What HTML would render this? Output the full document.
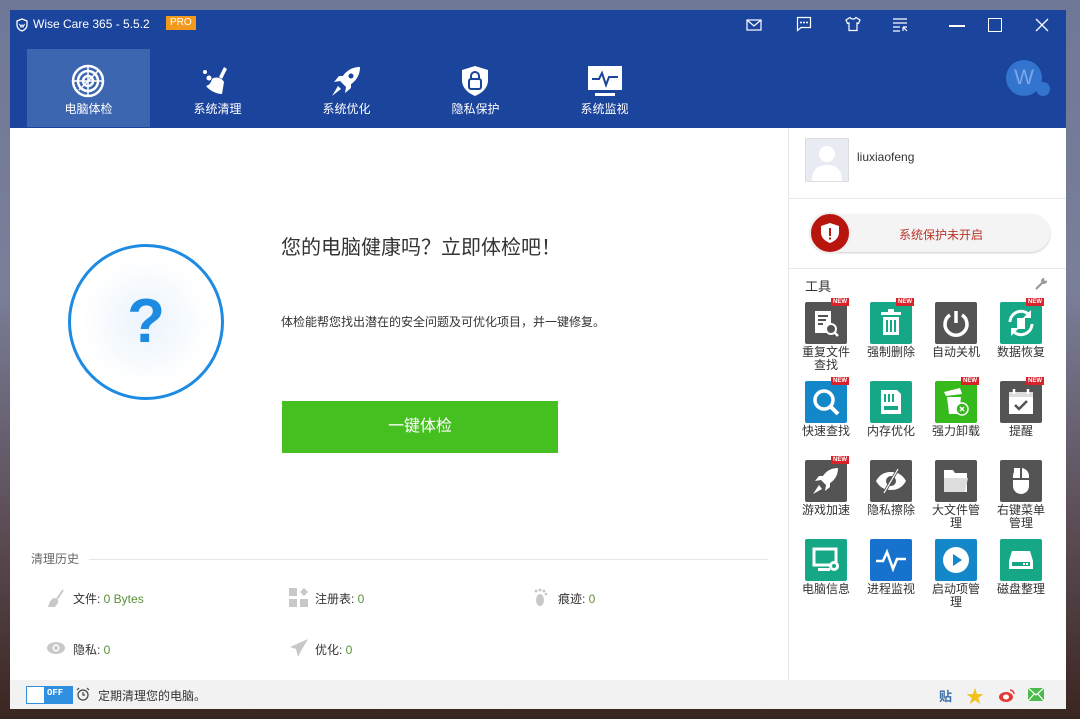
<!DOCTYPE html>
<html><head><meta charset="utf-8"><style>
*{margin:0;padding:0;box-sizing:border-box}
body{width:1080px;height:719px;overflow:hidden;position:relative;font-family:"Liberation Sans","Noto Sans CJK SC",sans-serif;background:linear-gradient(180deg,#6f7897 0%,#7a7f99 40%,#5a4a52 75%,#3a2620 100%)}
.a{position:absolute}
.win{left:10px;top:10px;width:1056px;height:699px;background:#fff;overflow:hidden}
.hdr{left:0;top:0;width:1056px;height:118px;background:#1b449c}
.tab{top:39px;width:123px;height:78px;color:#fff;font-size:12px;text-align:center}
.tab span{position:absolute;left:0;right:0;top:51px}
.tab svg{position:absolute;left:44px;top:15px}
.t{color:#333;font-size:12px;white-space:nowrap}
.tool{width:42px;height:42px;border-radius:2px}
.new{position:absolute;right:-2px;top:-4px;background:#d9222a;color:#fff;font-size:6px;font-weight:bold;padding:0 2px;line-height:8px}
.lbl{font-size:12px;color:#333;text-align:center;width:50px;line-height:13px;white-space:normal;word-break:break-all}
.g{color:#5a8f3a}
</style></head><body>
<div class="a win">
 <div class="a hdr">
  <svg class="a" style="left:5px;top:8px" width="14" height="14" viewBox="0 0 14 14"><path d="M7 1L12 3V7C12 10 9.5 12 7 13C4.5 12 2 10 2 7V3Z" fill="none" stroke="#fff" stroke-width="1.3"/><path d="M4.5 6L6 9L7 7L8 9L9.5 6" fill="none" stroke="#fff" stroke-width="1"/></svg>
  <div class="a" style="left:23px;top:7px;color:#fff;font-size:12px">Wise Care 365 - 5.5.2</div>
  <div class="a" style="left:156px;top:6px;background:#f39a1d;color:#fff;font-size:10px;padding:1px 4px;line-height:12px">PRO</div>
  <svg class="a" style="left:736px;top:8px" width="16" height="14"><rect x="1" y="2" width="14" height="10" fill="none" stroke="#fff" stroke-width="1.2"/><path d="M1 2L8 8L15 2" fill="none" stroke="#fff" stroke-width="1.2"/></svg>
  <svg class="a" style="left:786px;top:6px" width="16" height="16"><path d="M1.5 1.5H14.5V11.5H5L1.5 14.5Z" fill="none" stroke="#fff" stroke-width="1.2"/><circle cx="5" cy="6.5" r="1" fill="#fff"/><circle cx="8" cy="6.5" r="1" fill="#fff"/><circle cx="11" cy="6.5" r="1" fill="#fff"/></svg>
  <svg class="a" style="left:834px;top:6px" width="18" height="16"><path d="M6 1.5L2 4L3.5 7.5L5 7V14.5H13V7L14.5 7.5L16 4L12 1.5C11 3.5 7 3.5 6 1.5Z" fill="none" stroke="#fff" stroke-width="1.2"/></svg>
  <svg class="a" style="left:882px;top:7px" width="16" height="16"><path d="M1 2H15M1 6H15M1 10H8M1 14H8" stroke="#fff" stroke-width="1.2"/><path d="M11 10V14M11 10H15M11 10L15 14" stroke="#fff" stroke-width="1.2"/></svg>
  <div class="a" style="left:939px;top:15px;width:16px;height:1.5px;background:#fff"></div>
  <div class="a" style="left:978px;top:8px;width:14px;height:14px;border:1.3px solid #fff"></div>
  <svg class="a" style="left:1025px;top:8px" width="14" height="14"><path d="M1 1L13 13M13 1L1 13" stroke="#fff" stroke-width="1.3"/></svg>
  <div class="a" style="left:996px;top:50px;width:36px;height:36px;border-radius:50%;background:#3374cf;color:#7fa7e3;font-size:21px;text-align:center;line-height:36px">W</div>
  <div class="a" style="left:1026px;top:72px;width:14px;height:14px;border-radius:50%;background:#3374cf"></div>

  <div class="a tab" style="left:17px;background:#3d66b1">
   <svg width="34" height="34" viewBox="0 0 34 34"><circle cx="17" cy="17" r="15" fill="none" stroke="#fff" stroke-width="2.5"/><circle cx="17" cy="17" r="10" fill="none" stroke="#fff" stroke-width="2.5"/><circle cx="17" cy="17" r="5" fill="none" stroke="#fff" stroke-width="2.5"/><path d="M2 17H32M17 2V32M8 26L27 7" stroke="#fff" stroke-width="1.5"/></svg><span>电脑体检</span></div>
  <div class="a tab" style="left:146px">
   <svg width="34" height="34" viewBox="0 0 34 34"><circle cx="5" cy="8" r="2" fill="#fff"/><circle cx="9" cy="14" r="2.5" fill="#fff"/><path d="M24 3L27 5L22 15L19 13Z" fill="#fff"/><path d="M12 15C16 12 22 14 24 18L22 30C17 30 10 27 6 22C10 21 11 18 12 15Z" fill="#fff"/></svg><span>系统清理</span></div>
  <div class="a tab" style="left:275px">
   <svg width="34" height="34" viewBox="0 0 34 34"><path d="M31 3C22 3 15 8 11 17L17 23C26 19 31 12 31 3Z" fill="#fff"/><path d="M11 17L5 18L10 12H16ZM17 23L16 29L22 24V18Z" fill="#fff"/><path d="M9 22L3 32L12 25" fill="#fff"/><circle cx="22" cy="12" r="2.5" fill="#1b449c"/></svg><span>系统优化</span></div>
  <div class="a tab" style="left:404px">
   <svg width="34" height="34" viewBox="0 0 34 34"><path d="M17 2L30 6V16C30 24 24 29 17 32C10 29 4 24 4 16V6Z" fill="#fff"/><rect x="11" y="15" width="12" height="10" rx="2" fill="none" stroke="#1b449c" stroke-width="2"/><path d="M13 15V12A4 4 0 0 1 21 12V15" fill="none" stroke="#1b449c" stroke-width="2"/></svg><span>隐私保护</span></div>
  <div class="a tab" style="left:533px">
   <svg width="36" height="34" viewBox="0 0 36 34"><rect x="1" y="2" width="34" height="24" fill="#fff"/><rect x="8" y="29" width="20" height="3" fill="#fff"/><path d="M5 15H12L15 9L19 21L22 13H31" fill="none" stroke="#1b449c" stroke-width="2"/></svg><span>系统监视</span></div>
 </div>

 <!-- main -->
 <div class="a" style="left:778px;top:118px;width:1px;height:552px;background:#e6e6e6"></div>
 <div class="a" style="left:58px;top:234px;width:156px;height:156px;border-radius:50%;border:3px solid #1e8be3;background:radial-gradient(circle,#eaf3fc 0%,#fff 60%)"></div>
 <div class="a" style="left:58px;top:272px;width:156px;text-align:center;color:#1e8be3;font-size:62px;font-weight:bold;line-height:80px">?</div>
 <div class="a" style="left:271px;top:221px;font-size:20px;color:#333">您的电脑健康吗？立即体检吧！</div>
 <div class="a t" style="left:271px;top:303px;font-size:12px">体检能帮您找出潜在的安全问题及可优化项目，并一键修复。</div>
 <div class="a" style="left:272px;top:391px;width:276px;height:52px;background:#46bf21;color:#fff;font-size:16px;text-align:center;line-height:52px">一键体检</div>

 <div class="a t" style="left:21px;top:540px;color:#666">清理历史</div>
 <div class="a" style="left:79px;top:549px;width:679px;height:1px;background:#e6e6e6"></div>

 <svg class="a" style="left:36px;top:578px" width="20" height="20"><path d="M17 2L11 11" stroke="#c8c8c8" stroke-width="2"/><path d="M8 10C11 10 13 12 12 15L9 19H2C3 15 5 11 8 10Z" fill="#c8c8c8"/></svg>
 <div class="a t" style="left:63px;top:580px">文件: <span class="g">0 Bytes</span></div>
 <svg class="a" style="left:279px;top:578px" width="20" height="20"><rect x="0" y="0" width="8" height="8" fill="#c8c8c8"/><rect x="0" y="11" width="8" height="8" fill="#c8c8c8"/><rect x="11" y="11" width="8" height="8" fill="#c8c8c8"/><path d="M15 0L19 4L15 8L11 4Z" fill="#c8c8c8"/></svg>
 <div class="a t" style="left:305px;top:580px">注册表: <span class="g">0</span></div>
 <svg class="a" style="left:522px;top:578px" width="20" height="20"><ellipse cx="8" cy="12" rx="4" ry="6" fill="#c8c8c8"/><circle cx="4" cy="3" r="1.5" fill="#c8c8c8"/><circle cx="8" cy="2" r="1.5" fill="#c8c8c8"/><circle cx="12" cy="3" r="1.5" fill="#c8c8c8"/><circle cx="14" cy="6" r="1.3" fill="#c8c8c8"/></svg>
 <div class="a t" style="left:548px;top:580px">痕迹: <span class="g">0</span></div>
 <svg class="a" style="left:36px;top:630px" width="20" height="16"><ellipse cx="10" cy="8" rx="9" ry="6" fill="#c8c8c8"/><circle cx="10" cy="8" r="3.5" fill="#fff"/><circle cx="10" cy="8" r="2" fill="#c8c8c8"/></svg>
 <div class="a t" style="left:63px;top:631px">隐私: <span class="g">0</span></div>
 <svg class="a" style="left:279px;top:628px" width="20" height="20"><path d="M19 1L1 9L7 11L9 19L12 13Z" fill="#c8c8c8"/></svg>
 <div class="a t" style="left:305px;top:631px">优化: <span class="g">0</span></div>

 <!-- footer -->
 <div class="a" style="left:0;top:670px;width:1056px;height:29px;background:#f2f2f2"></div>
 <div class="a" style="left:16px;top:676px;width:47px;height:18px;border:1px solid #2f8fe0;background:#2f8fe0"><div style="position:absolute;left:0;top:0;width:17px;height:16px;background:#fff"></div><div style="position:absolute;left:20px;top:1px;color:#fff;font-size:9px;font-family:'Liberation Mono',monospace;font-weight:bold">OFF</div></div>
 <svg class="a" style="left:66px;top:677px" width="14" height="14"><circle cx="7" cy="8" r="5" fill="none" stroke="#444" stroke-width="1.2"/><path d="M7 5V8H9M1 3L3 1M13 3L11 1" stroke="#444" stroke-width="1.2" fill="none"/></svg>
 <div class="a t" style="left:88px;top:677px">定期清理您的电脑。</div>
 <div class="a" style="left:929px;top:676px;color:#3b6ea5;font-size:13px;font-weight:bold">贴</div>
 <div class="a" style="left:956px;top:673px;color:#f2c21a;font-size:18px">★</div>
 <svg class="a" style="left:988px;top:677px" width="18" height="16"><ellipse cx="8" cy="10" rx="7" ry="5" fill="#e23a3a"/><ellipse cx="8" cy="10" rx="3" ry="2.5" fill="#fff"/><path d="M12 3A4 4 0 0 1 16 7" stroke="#e23a3a" stroke-width="1.5" fill="none"/></svg>
 <svg class="a" style="left:1018px;top:678px" width="16" height="13"><rect width="16" height="13" fill="#4cbb4c"/><path d="M0 0L8 7L16 0M0 13L6 6M16 13L10 6" stroke="#fff" stroke-width="1.2" fill="none"/></svg>

 <!-- right panel -->
 <div class="a" style="left:795px;top:128px;width:44px;height:44px;border:1px solid #ddd;background:#e8ebf2"><svg width="42" height="42"><circle cx="21" cy="15" r="8" fill="#fff"/><path d="M6 42C6 30 12 26 21 26C30 26 36 30 36 42Z" fill="#fff"/></svg></div>
 <div class="a t" style="left:847px;top:140px;font-size:12px">liuxiaofeng</div>
 <div class="a" style="left:779px;top:188px;width:277px;height:1px;background:#e8e8e8"></div>
 <div class="a" style="left:800px;top:204px;width:240px;height:38px;border-radius:19px;background:#f4f4f4;box-shadow:0 1px 2px #ccc"></div>
 <div class="a" style="left:799px;top:202px;width:42px;height:42px;border-radius:50%;background:#b8150f;border:2px solid #eee"></div>
 <svg class="a" style="left:808px;top:211px" width="24" height="24"><path d="M12 2L21 5V11C21 17 17 20 12 22C7 20 3 17 3 11V5Z" fill="#fff"/><rect x="11" y="7" width="2" height="8" fill="#b8150f"/><rect x="11" y="16.5" width="2" height="2" fill="#b8150f"/></svg>
 <div class="a" style="left:889px;top:216px;color:#b8352a;font-size:12px">系统保护未开启</div>
 <div class="a" style="left:779px;top:258px;width:277px;height:1px;background:#e8e8e8"></div>
 <div class="a t" style="left:795px;top:266px;font-size:13px">工具</div>
 <svg class="a" style="left:1024px;top:267px" width="14" height="14"><path d="M2 12L8 6" stroke="#999" stroke-width="2.2"/><circle cx="10" cy="4" r="3" fill="#999"/><circle cx="11.5" cy="2.5" r="1.4" fill="#fff"/></svg>

 <!-- tools row 1 -->
 <div class="a tool" style="left:795px;top:292px;background:#545454"><svg width="42" height="42"><rect x="10" y="9" width="16" height="22" fill="#fff"/><path d="M13 14H23M13 18H21M13 22H18" stroke="#545454" stroke-width="2"/><circle cx="26" cy="27" r="5" fill="#545454" stroke="#fff" stroke-width="2"/><path d="M29 30L33 34" stroke="#fff" stroke-width="2.5"/></svg><div class="new">NEW</div></div>
 <div class="a tool" style="left:860px;top:292px;background:#15a786"><svg width="42" height="42"><rect x="11" y="10" width="20" height="3" fill="#fff"/><rect x="18" y="7" width="6" height="3" fill="#fff"/><path d="M13 15H29V33H13Z" fill="#fff"/><path d="M17 18V30M21 18V30M25 18V30" stroke="#15a786" stroke-width="2"/></svg><div class="new">NEW</div></div>
 <div class="a tool" style="left:925px;top:292px;background:#545454"><svg width="42" height="42"><path d="M15 13A11 11 0 1 0 27 13" fill="none" stroke="#fff" stroke-width="3.5"/><path d="M21 9V21" stroke="#fff" stroke-width="3.5"/></svg></div>
 <div class="a tool" style="left:990px;top:292px;background:#15a786"><svg width="42" height="42"><path d="M10 20A11 11 0 0 1 30 14M32 22A11 11 0 0 1 12 28" fill="none" stroke="#fff" stroke-width="3"/><path d="M31 8V16H23ZM11 34V26H19Z" fill="#fff"/><rect x="17" y="16" width="8" height="11" fill="#fff"/></svg><div class="new">NEW</div></div>
 <div class="a lbl" style="left:791px;top:336px">重复文件查找</div>
 <div class="a lbl" style="left:856px;top:336px">强制删除</div>
 <div class="a lbl" style="left:921px;top:336px">自动关机</div>
 <div class="a lbl" style="left:986px;top:336px">数据恢复</div>

 <!-- row 2 -->
 <div class="a tool" style="left:795px;top:371px;background:#1487c9"><svg width="42" height="42"><circle cx="19" cy="19" r="9" fill="none" stroke="#fff" stroke-width="3.5"/><path d="M26 26L33 33" stroke="#fff" stroke-width="4"/></svg><div class="new">NEW</div></div>
 <div class="a tool" style="left:860px;top:371px;background:#15a786"><svg width="42" height="42"><path d="M11 9H27L31 13V33H11Z" fill="#fff"/><path d="M15 13V21M19 13V21M23 13V21" stroke="#15a786" stroke-width="2"/><rect x="14" y="25" width="14" height="4" fill="#15a786"/></svg></div>
 <div class="a tool" style="left:925px;top:371px;background:#36b91b"><svg width="42" height="42"><path d="M9 11L25 7L27 13L11 15Z" fill="#fff"/><path d="M12 16H26L24 33H14Z" fill="#fff"/><circle cx="27" cy="28" r="6" fill="#36b91b" stroke="#fff" stroke-width="1.5"/><path d="M25 26L29 30M29 26L25 30" stroke="#fff" stroke-width="1.5"/></svg><div class="new">NEW</div></div>
 <div class="a tool" style="left:990px;top:371px;background:#545454"><svg width="42" height="42"><rect x="9" y="11" width="24" height="22" fill="#fff"/><rect x="9" y="11" width="24" height="5" fill="#ddd"/><path d="M14 8V13M28 8V13" stroke="#fff" stroke-width="2.5"/><path d="M15 24L19 28L27 20" fill="none" stroke="#545454" stroke-width="2.5"/></svg><div class="new">NEW</div></div>
 <div class="a lbl" style="left:791px;top:415px">快速查找</div>
 <div class="a lbl" style="left:856px;top:415px">内存优化</div>
 <div class="a lbl" style="left:921px;top:415px">强力卸载</div>
 <div class="a lbl" style="left:986px;top:415px">提醒</div>

 <!-- row 3 -->
 <div class="a tool" style="left:795px;top:450px;background:#545454"><svg width="42" height="42"><path d="M33 8C25 8 19 12 16 20L21 25C29 22 33 16 33 8Z" fill="#fff"/><path d="M16 20L10 21L14 16H19ZM21 25L20 31L25 27V22Z" fill="#fff"/><path d="M14 25L8 34L17 29" fill="#fff"/></svg><div class="new">NEW</div></div>
 <div class="a tool" style="left:860px;top:450px;background:#545454"><svg width="42" height="42"><path d="M6 21C10 14 15 12 21 12C27 12 32 14 36 21C32 28 27 30 21 30C15 30 10 28 6 21Z" fill="#fff"/><circle cx="21" cy="21" r="5" fill="#545454"/><path d="M28 9L14 33" stroke="#545454" stroke-width="3"/><path d="M28 9L14 33" stroke="#fff" stroke-width="1.2"/></svg></div>
 <div class="a tool" style="left:925px;top:450px;background:#545454"><svg width="42" height="42"><path d="M9 10H18L20 13H32V32H9Z" fill="#fff"/><path d="M9 18H33L30 32H9Z" fill="#ddd"/></svg></div>
 <div class="a tool" style="left:990px;top:450px;background:#545454"><svg width="42" height="42"><path d="M13 16A8 8 0 0 1 29 16V26A8 8 0 0 1 13 26Z" fill="#fff"/><path d="M13 19H29M21 8V19" stroke="#545454" stroke-width="2"/><rect x="14" y="8" width="6" height="10" fill="#fff"/></svg></div>
 <div class="a lbl" style="left:791px;top:494px">游戏加速</div>
 <div class="a lbl" style="left:856px;top:494px">隐私擦除</div>
 <div class="a lbl" style="left:921px;top:494px">大文件管理</div>
 <div class="a lbl" style="left:986px;top:494px">右键菜单管理</div>

 <!-- row 4 -->
 <div class="a tool" style="left:795px;top:529px;background:#15a786"><svg width="42" height="42"><rect x="9" y="10" width="22" height="16" fill="none" stroke="#fff" stroke-width="3"/><rect x="13" y="29" width="12" height="3" fill="#fff"/><circle cx="29" cy="27" r="5" fill="#fff"/><circle cx="29" cy="27" r="2" fill="#15a786"/></svg></div>
 <div class="a tool" style="left:860px;top:529px;background:#1672cc"><svg width="42" height="42"><path d="M6 22H13L17 13L23 30L27 20H36" fill="none" stroke="#fff" stroke-width="2.5"/></svg></div>
 <div class="a tool" style="left:925px;top:529px;background:#1487c9"><svg width="42" height="42"><circle cx="21" cy="21" r="13" fill="#fff"/><path d="M18 15V27L27 21Z" fill="#1487c9"/></svg></div>
 <div class="a tool" style="left:990px;top:529px;background:#15a786"><svg width="42" height="42"><path d="M12 12H30L33 22V30H9V22Z" fill="#fff"/><rect x="12" y="23" width="18" height="4" fill="#15a786"/><rect x="23" y="24" width="2" height="2" fill="#fff"/><rect x="26" y="24" width="2" height="2" fill="#fff"/></svg></div>
 <div class="a lbl" style="left:791px;top:573px">电脑信息</div>
 <div class="a lbl" style="left:856px;top:573px">进程监视</div>
 <div class="a lbl" style="left:921px;top:573px">启动项管理</div>
 <div class="a lbl" style="left:986px;top:573px">磁盘整理</div>
</div>
</body></html>
